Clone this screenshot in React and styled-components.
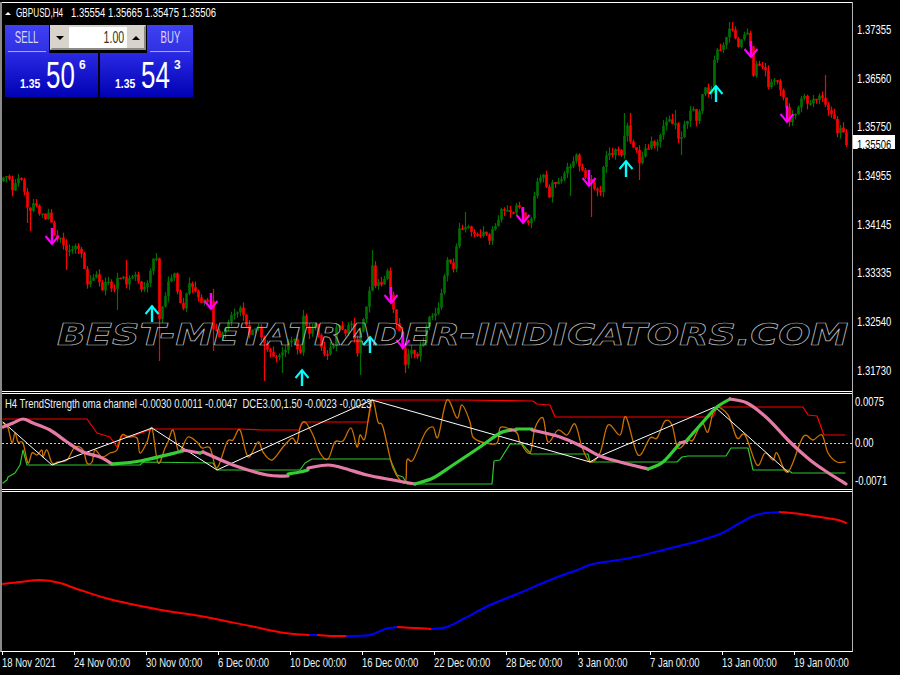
import React from "react";
import styled, { createGlobalStyle } from "styled-components";

const GlobalStyle = createGlobalStyle`
    html, body {
        margin: 0;
        padding: 0;
        background: #000;
    }
`;

// price path of the candles, in chart pixels
const PATH = [
    [3,181],[8,175],[12,187],[17,175],[23,182],[27,210],[30,212],[35,202],[40,215],[45,218],[50,208],[52,230],[57,238],[62,242],[67,252],[73,247],[80,247],[83,263],[87,282],[95,272],
    [102,287],[107,283],[112,293],[118,278],[127,282],[137,272],[140,293],[148,280],[153,257],[157,260],[159,317],[163,300],[168,282],[173,270],[178,297],[182,310],[188,283],[195,293],
    [203,303],[210,300],[213,330],[220,337],[230,317],[242,307],[247,333],[257,327],[267,347],[273,358],[283,350],[293,340],[300,350],[303,315],[310,337],[315,323],[320,347],[327,355],
    [333,343],[337,323],[345,333],[350,317],[357,350],[362,320],[368,300],[372,262],[375,283],[382,282],[387,273],[390,297],[395,320],[400,337],[405,363],[410,347],[417,353],[422,343],
    [430,317],[437,313],[440,305],[443,278],[447,258],[453,267],[458,233],[463,227],[467,223],[472,230],[475,240],[482,230],[488,240],[497,220],[502,208],[512,215],[517,200],[523,218],
    [530,228],[533,203],[537,183],[543,172],[548,198],[552,183],[563,175],[572,163],[575,152],[582,172],[590,183],[600,193],[603,167],[608,153],[617,152],[622,155],[626,120],[629,140],
    [635,147],[638,165],[643,155],[650,143],[658,142],[662,125],[668,117],[675,125],[678,142],[688,115],[693,107],[697,128],[700,100],[705,90],[712,90],[713,67],[717,47],[722,52],
    [728,30],[733,28],[737,47],[743,32],[749,32],[752,80],[757,63],[760,72],[767,65],[768,87],[775,82],[778,77],[782,98],[785,97],[788,128],[792,117],[798,108],[803,97],[810,103],
    [815,98],[823,97],[828,113],[833,117],[837,132],[842,130],[846,143],
];

// long wicks that stand out of the noise: [x, y]
const WICKS = [
    [27,223],[30,231],[67,270],[117,310],[125,260],[155,253],[158,361],[212,289],[213,351],[263,381],[281,373],[359,375],[372,250],[404,373],
    [464,212],[569,196],[590,217],[624,113],[629,113],[638,180],[674,110],[680,155],[728,22],[733,22],[824,75],
];

const UP_ARROWS = [[152,306],[302,370],[370,337],[626,161],[716,86]];
const DOWN_ARROWS = [[52,228],[211,293],[391,287],[403,332],[523,207],[589,170],[751,41],[787,106]];

const RED_CHANNEL = [[3,419],[87,419],[97,433],[110,437],[117,447],[121,436],[133,436],[152,429],[240,429],[263,430],[299,430],[302,422],[368,422],[372,400],[460,400],[533,401],[537,404],[550,405],[555,417],[600,417],[713,417],[717,407],[803,407],[808,415],[817,416],[824,435],[845,435]];
const GREEN_CHANNEL = [[3,483],[7,480],[8,477],[15,473],[20,465],[23,450],[27,465],[140,465],[143,462],[213,463],[217,470],[300,470],[305,463],[312,459],[390,459],[397,475],[403,477],[407,484],[492,484],[494,461],[500,460],[510,444],[522,444],[531,454],[588,454],[590,462],[600,462],[677,462],[682,457],[688,456],[726,456],[731,448],[748,448],[753,470],[788,470],[792,473],[845,473]];
const ZIGZAG = [[3,422],[52,465],[152,428],[217,470],[300,432],[372,400],[590,462],[600,456],[715,407],[788,472]];
const OSCILLATOR = [
    [3,423],[8,428],[12,443],[15,433],[18,442],[23,443],[28,463],[32,453],[37,455],[42,450],[43,457],[47,450],[52,463],[58,462],[67,460],[75,447],[83,450],[87,463],[92,462],[95,450],[102,457],[110,453],[117,450],[122,435],[128,437],[137,438],[140,453],[147,442],[152,428],[158,463],[165,448],[168,442],[173,430],[178,450],[182,448],[188,437],[197,442],[202,448],[210,448],[217,468],[227,442],[233,440],[240,430],[248,457],[258,442],[263,452],[272,460],[283,447],[292,438],[297,443],
    [300,428],[305,422],[313,435],[320,453],[328,459],[335,442],[343,441],[351,428],[357,447],[360,435],[365,438],[372,400],[378,422],[383,427],[393,468],[405,483],[407,460],[413,460],[425,433],[433,427],[438,437],[447,400],[457,418],[462,405],[470,422],[473,437],[485,443],[497,443],[500,428],[507,428],[517,433],[520,442],[530,453],[535,428],[543,418],[548,442],[558,430],[567,435],[575,424],[582,447],[590,462],[600,453],
    [608,425],[620,435],[626,417],[638,455],[650,438],[657,438],[665,421],[672,425],[678,448],[688,440],[693,440],[702,423],[708,432],[715,408],[728,415],[737,438],[745,435],[757,465],[765,453],[773,460],[777,453],[788,472],[803,437],[813,440],[822,435],[828,453],[837,462],[845,462],
];

const PINK = "#e47aa6";
const LIME = "#35cf35";
const TREND = [
    [PINK, [[3,427],[13,423],[23,419],[33,423],[50,430],[67,442],[83,452],[100,457],[112,464]]],
    [LIME, [[112,464],[140,461],[183,451]]],
    [PINK, [[183,450],[200,453]]],
    [LIME, [[200,453],[203,452]]],
    [PINK, [[203,452],[233,465],[267,475],[288,476]]],
    [LIME, [[288,474],[300,472],[308,470]]],
    [PINK, [[308,468],[328,465],[343,468],[367,475],[393,480],[415,484]]],
    [LIME, [[415,484],[433,478],[453,465],[480,447],[500,433],[511,430]]],
    [PINK, [[511,430],[516,430]]],
    [LIME, [[516,429],[532,429]]],
    [PINK, [[532,430],[560,437],[583,447],[600,456],[620,462],[648,469]]],
    [LIME, [[648,469],[663,462],[680,443]]],
    [PINK, [[680,443],[687,441]]],
    [LIME, [[687,440],[703,422],[717,407],[730,399]]],
    [PINK, [[730,399],[747,403],[767,418],[790,442],[810,460],[827,472],[846,484]]],
];

const AVERAGE = [
    ["#ff0000", [[3,584],[20,582],[40,580],[60,583],[80,590],[113,600],[167,611],[200,616],[250,626],[285,633],[310,635]]],
    ["#0000ff", [[310,635],[318,635]]],
    ["#ff0000", [[318,635],[332,636],[347,636]]],
    ["#0000ff", [[347,636],[370,635],[385,629],[398,627]]],
    ["#ff0000", [[398,627],[415,628],[432,629]]],
    ["#0000ff", [[432,629],[447,627],[465,618],[490,605],[517,594],[550,580],[577,570],[593,564],[630,558],[667,549],[695,542],[720,534],[738,524],[753,516],[765,513],[780,512]]],
    ["#ff0000", [[780,512],[800,514],[820,517],[838,520],[846,523]]],
];

const MAIN_PRICES = ["1.37355", "1.36560", "1.35750", "1.34955", "1.34145", "1.33335", "1.32540", "1.31730"];
const TIME_LABELS = ["18 Nov 2021", "24 Nov 00:00", "30 Nov 00:00", "6 Dec 00:00", "10 Dec 00:00", "16 Dec 00:00", "22 Dec 00:00", "28 Dec 00:00", "3 Jan 00:00", "7 Jan 00:00", "13 Jan 00:00", "19 Jan 00:00"];

const toPoints = (pts) => pts.map(([x, y]) => `${x - 2},${y}`).join(" ");

// catmull-rom through the points, for the smoothed indicator lines
const toCurve = (pts) => {
    let d = `M${pts[0][0] - 2} ${pts[0][1]}`;
    for (let i = 0; i < pts.length - 1; i++) {
        const a = pts[Math.max(i - 1, 0)];
        const b = pts[i];
        const c = pts[i + 1];
        const e = pts[Math.min(i + 2, pts.length - 1)];
        const c1x = b[0] + (c[0] - a[0]) / 6 - 2;
        const c1y = b[1] + (c[1] - a[1]) / 6;
        const c2x = c[0] - (e[0] - b[0]) / 6 - 2;
        const c2y = c[1] - (e[1] - b[1]) / 6;
        d += ` C${c1x} ${c1y} ${c2x} ${c2y} ${c[0] - 2} ${c[1]}`;
    }
    return d;
};

const priceAt = (x) => {
    for (let i = 1; i < PATH.length; i++) {
        if (x <= PATH[i][0]) {
            const [x0, y0] = PATH[i - 1];
            const [x1, y1] = PATH[i];
            return y0 + ((y1 - y0) * (x - x0)) / (x1 - x0);
        }
    }
    return PATH[PATH.length - 1][1];
};

const buildCandles = () => {
    let seed = 77;
    const rand = () => {
        seed = (seed * 16807) % 2147483647;
        return seed / 2147483647;
    };
    const candles = [];
    let prev = priceAt(3);
    for (let x = 3; x <= 846; x += 3) {
        const close = priceAt(x) + (rand() - 0.5) * 7;
        let high = Math.min(prev, close) - rand() * 6;
        let low = Math.max(prev, close) + rand() * 6;
        WICKS.forEach(([wx, wy]) => {
            if (Math.abs(wx - x) <= 1) {
                high = Math.min(high, wy);
                low = Math.max(low, wy);
            }
        });
        candles.push({ x, open: prev, close, high, low });
        prev = close;
    }
    return candles;
};

const CANDLES = buildCandles();

const Page = styled.div`
    display: flex;
    flex-direction: column;
    width: 900px;
    height: 675px;
    padding-top: 2px;
    box-sizing: border-box;
    overflow: hidden;
    background: #000;
    color: #fff;
    font-family: "Liberation Sans", Arial, sans-serif;
`;

const Workspace = styled.div`
    display: flex;
`;

const Panes = styled.div`
    display: flex;
    flex-direction: column;
    width: 850px;
    border-left: 2px solid #8a8a8a;
    border-right: 1px solid #b4b4b4;
    border-bottom: 1px solid #fff;
`;

const Pane = styled.div`
    position: relative;
    height: ${(p) => p.$height}px;
    border-top: ${(p) => (p.$first ? "1px solid #fff" : "3px double #fff")};
`;

const Plot = styled.svg`
    display: block;
    width: 850px;
    height: 100%;
`;

const NarrowText = styled.span`
    display: inline-block;
    white-space: nowrap;
    line-height: 14px;
    font-size: 12px;
    transform: scaleX(${(p) => p.$scale || 0.79});
    transform-origin: left center;
`;

const ChartHeader = styled.div`
    position: absolute;
    top: 3px;
    left: 3px;
    display: flex;
    align-items: center;
    gap: 5px;
`;

const HeaderSymbol = styled(NarrowText)`
    width: 50px;
`;

const IndicatorTitle = styled(NarrowText)`
    position: absolute;
    top: 3px;
    left: 3px;
    color: #e8f0f4;
`;

const Watermark = styled.div`
    position: absolute;
    top: 312px;
    left: 55px;
    white-space: nowrap;
    font-family: "DejaVu Sans", sans-serif;
    font-size: 30px;
    line-height: 40px;
    font-weight: 700;
    font-style: italic;
    color: transparent;
    -webkit-text-stroke: 0.7px #bcbcbc;
    transform: scaleX(1.268);
    transform-origin: left center;
`;

const TradePanel = styled.div`
    position: absolute;
    top: 22px;
    left: 3px;
    display: flex;
    flex-direction: column;
    width: 188px;
`;

const TopRow = styled.div`
    display: flex;
    align-items: flex-start;
    height: 28px;
`;

const SideButton = styled.div`
    display: flex;
    flex-direction: column;
    align-items: center;
    width: ${(p) => p.$width}px;
    height: 28px;
    box-sizing: border-box;
    padding: 0 3px;
    background: linear-gradient(#4040f4, #3030e2);
    color: #d8d8ff;
`;

const SideLabel = styled.span`
    display: block;
    flex: 1;
    line-height: 26px;
    font-size: 16px;
    transform: scaleX(0.6);
`;

const SideRule = styled.div`
    align-self: stretch;
    height: 1px;
    margin-bottom: 1px;
    background: #a4a4f4;
`;

const Spinner = styled.div`
    display: flex;
    width: 96px;
    height: 25px;
    margin: 0 1px;
    box-sizing: border-box;
    border: 2px solid #d8d4cc;
    border-bottom-color: #8c8a84;
    border-right-color: #8c8a84;
    background: #d8d4cc;
`;

const SpinButton = styled.div`
    display: flex;
    align-items: center;
    justify-content: center;
    width: 16px;
    background: #d8d4cc;
    color: #000;
`;

const SpinValue = styled.div`
    display: flex;
    align-items: center;
    justify-content: flex-end;
    flex: 1;
    margin: 0 1px;
    padding-right: 3px;
    background: #fff;
    color: #3a3020;
    font-size: 16px;
`;

const SpinText = styled.span`
    display: inline-block;
    transform: scaleX(0.66);
    transform-origin: right center;
`;

const Triangle = styled.div`
    width: 0;
    height: 0;
    border-left: ${(p) => p.$size}px solid transparent;
    border-right: ${(p) => p.$size}px solid transparent;
    ${(p) => (p.$down ? "border-top" : "border-bottom")}: ${(p) => p.$size}px solid ${(p) => p.$color};
`;

const QuoteRow = styled.div`
    display: flex;
    gap: 2px;
`;

const QuoteTile = styled.div`
    display: flex;
    align-items: flex-start;
    flex: 1;
    height: 44px;
    box-sizing: border-box;
    padding-left: 15px;
    background: linear-gradient(#2a2ae4, #0000b4);
`;

const QuoteBase = styled.span`
    width: 26px;
    margin-top: 23px;
    font-size: 13px;
    line-height: 15px;
    font-weight: 700;
    white-space: nowrap;
    transform: scaleX(0.8);
    transform-origin: left center;
`;

const QuoteBig = styled.span`
    width: 33px;
    margin-top: 3px;
    font-size: 37px;
    line-height: 40px;
    white-space: nowrap;
    transform: scaleX(0.7);
    transform-origin: left center;
`;

const QuoteSmall = styled.span`
    margin-top: 5px;
    font-size: 12px;
    line-height: 14px;
    font-weight: 700;
`;

const Scales = styled.div`
    display: flex;
    flex-direction: column;
`;

const ScaleBlock = styled.div`
    position: relative;
    display: flex;
    flex-direction: column;
    height: ${(p) => p.$height}px;
    box-sizing: border-box;
    padding-top: ${(p) => p.$top}px;
    padding-left: ${(p) => p.$left}px;
    gap: ${(p) => p.$gap}px;
`;

const LowLabel = styled(NarrowText)`
    margin-top: -3px;
`;

const PriceTag = styled.div`
    position: absolute;
    top: 133px;
    left: 0;
    width: 42px;
    height: 14px;
    padding-left: 4px;
    box-sizing: border-box;
    background: #fff;
    color: #000;
`;

const TimeAxis = styled.div`
    display: grid;
    grid-template-columns: repeat(12, 72px);
    padding-left: 2px;
`;

const TimeCell = styled.div`
    display: flex;
    flex-direction: column;
`;

const TimeTick = styled.div`
    width: 1px;
    height: 3px;
    background: #fff;
`;

const TimeLabel = styled(NarrowText)`
    margin-top: 1px;
    color: #eef4f8;
`;

const Candle = ({ x, open, close, high, low }) => {
    const up = close < open;
    const color = up ? "#007000" : "#ff0000";
    const top = Math.min(open, close);
    return (
        <g fill={color}>
            <rect x={x - 2.1} y={high} width={1.2} height={low - high} />
            <rect x={x - 2.8} y={top} width={2.6} height={Math.max(1.5, Math.abs(open - close))} />
        </g>
    );
};

const Arrow = ({ x, y, down }) => {
    const color = down ? "#ff00ff" : "#00ffff";
    const px = x - 2;
    const head = down
        ? `${px - 6.5},${y + 8} ${px},${y + 16} ${px + 6.5},${y + 8}`
        : `${px - 6.5},${y + 8} ${px},${y} ${px + 6.5},${y + 8}`;
    return (
        <g stroke={color} fill="none">
            <line x1={px} y1={y} x2={px} y2={y + 16} strokeWidth={2.4} />
            <polyline points={head} strokeWidth={2} />
        </g>
    );
};

const Line = ({ points, color, width = 1 }) => (
    <polyline points={toPoints(points)} fill="none" stroke={color} strokeWidth={width} strokeLinejoin="round" strokeLinecap="round" />
);

const Curve = ({ points, color, width = 1 }) => (
    <path d={toCurve(points)} fill="none" stroke={color} strokeWidth={width} strokeLinecap="round" />
);

const MainChart = () => (
    <Plot viewBox="0 3 850 388" preserveAspectRatio="none">
        {CANDLES.map((c) => (
            <Candle key={c.x} {...c} />
        ))}
        {UP_ARROWS.map(([x, y]) => (
            <Arrow key={x} x={x} y={y} />
        ))}
        {DOWN_ARROWS.map(([x, y]) => (
            <Arrow key={x} x={x} y={y} down />
        ))}
    </Plot>
);

const TrendChart = () => (
    <Plot viewBox="0 394 850 95" preserveAspectRatio="none">
        <line x1={0} y1={443.5} x2={850} y2={443.5} stroke="#ffb0ff" strokeWidth={1} strokeDasharray="2 2" />
        <Line points={RED_CHANNEL} color="#ff0000" width={1.2} />
        <Line points={GREEN_CHANNEL} color="#2cc82c" width={1.2} />
        <Curve points={OSCILLATOR} color="#cc7000" width={1.3} />
        <Line points={ZIGZAG} color="#ffffff" />
        {TREND.map(([color, points]) => (
            <Curve key={points[0].join()} points={points} color={color} width={3.2} />
        ))}
    </Plot>
);

const AverageChart = () => (
    <Plot viewBox="0 492 850 159" preserveAspectRatio="none">
        {AVERAGE.map(([color, points]) => (
            <Curve key={points[0].join()} points={points} color={color} width={2} />
        ))}
    </Plot>
);

const QuoteCard = ({ big, small }) => (
    <QuoteTile>
        <QuoteBase>1.35</QuoteBase>
        <QuoteBig>{big}</QuoteBig>
        <QuoteSmall>{small}</QuoteSmall>
    </QuoteTile>
);

const App = () => (
    <Page>
        <GlobalStyle />
        <Workspace>
            <Panes>
                <Pane $first $height={388}>
                    <MainChart />
                    <Watermark>BEST-METATRADER-INDICATORS.COM</Watermark>
                    <ChartHeader>
                        <Triangle $size={3} $color="#fff" />
                        <HeaderSymbol $scale={0.68}>GBPUSD,H4</HeaderSymbol>
                        <NarrowText>1.35554 1.35665 1.35475 1.35506</NarrowText>
                    </ChartHeader>
                    <TradePanel>
                        <TopRow>
                            <SideButton $width={44}>
                                <SideLabel>SELL</SideLabel>
                                <SideRule />
                            </SideButton>
                            <Spinner>
                                <SpinButton>
                                    <Triangle $size={4} $color="#000" $down />
                                </SpinButton>
                                <SpinValue>
                                    <SpinText>1.00</SpinText>
                                </SpinValue>
                                <SpinButton>
                                    <Triangle $size={4} $color="#000" />
                                </SpinButton>
                            </Spinner>
                            <SideButton $width={46}>
                                <SideLabel>BUY</SideLabel>
                                <SideRule />
                            </SideButton>
                        </TopRow>
                        <QuoteRow>
                            <QuoteCard big="50" small="6" />
                            <QuoteCard big="54" small="3" />
                        </QuoteRow>
                    </TradePanel>
                </Pane>
                <Pane $height={95}>
                    <TrendChart />
                    <IndicatorTitle>H4 TrendStrength oma channel -0.0030 0.0011 -0.0047 &nbsp;DCE3.00,1.50 -0.0023 -0.0023</IndicatorTitle>
                </Pane>
                <Pane $height={159}>
                    <AverageChart />
                </Pane>
            </Panes>
            <Scales>
                <ScaleBlock $height={389} $top={21} $left={4} $gap={34.7}>
                    {MAIN_PRICES.map((price) => (
                        <NarrowText key={price}>{price}</NarrowText>
                    ))}
                    <PriceTag>
                        <NarrowText>1.35506</NarrowText>
                    </PriceTag>
                </ScaleBlock>
                <ScaleBlock $height={98} $top={4} $left={2} $gap={27}>
                    <NarrowText>0.0075</NarrowText>
                    <NarrowText>0.00</NarrowText>
                    <LowLabel>-0.0071</LowLabel>
                </ScaleBlock>
            </Scales>
        </Workspace>
        <TimeAxis>
            {TIME_LABELS.map((label) => (
                <TimeCell key={label}>
                    <TimeTick />
                    <TimeLabel>{label}</TimeLabel>
                </TimeCell>
            ))}
        </TimeAxis>
    </Page>
);

export default App;
